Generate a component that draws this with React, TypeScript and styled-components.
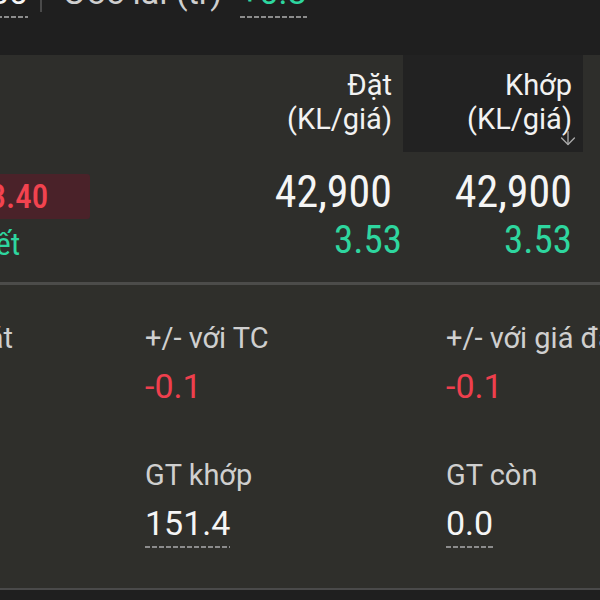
import styled, { createGlobalStyle } from "styled-components";
import { ArrowDown } from "lucide-react";

const GlobalStyle = createGlobalStyle`
  html, body {
    margin: 0;
    padding: 0;
    background: #1f1f1f;
  }
  body {
    font-family: Roboto, "Noto Sans", sans-serif;
  }
`;

const Screen = styled.div`
  width: 600px;
  height: 600px;
  overflow: hidden;
  background: #1f1f1f;
  display: flex;
  flex-direction: column;
`;

const TopBar = styled.div`
  height: 55px;
  flex-shrink: 0;
  display: flex;
  align-items: flex-start;
  margin-left: -10px;
  background: #1f1f1f;
`;

const TopItem = styled.span<{ $tone?: "white" | "green" | "gray" }>`
  margin-top: -26px;
  font-size: 34px;
  line-height: 36px;
  white-space: nowrap;
  color: ${(p) =>
    p.$tone === "green" ? "#2ed69f" : p.$tone === "gray" ? "#cfcfcf" : "#f5f5f5"};
`;

const Dashed = styled.span<{ $gap?: number }>`
  display: inline-block;
  padding-bottom: ${(p) => p.$gap ?? 8}px;
  background-image: repeating-linear-gradient(
    to right,
    #8c8c8c 0 5px,
    transparent 5px 7px
  );
  background-size: 100% 2px;
  background-position: left bottom;
  background-repeat: no-repeat;
`;

const TopDivider = styled.span`
  width: 2px;
  height: 12px;
  margin: 0 21px 0 12px;
  background: #4a4a4a;
`;

const TopValue = styled(TopItem)`
  margin-left: 18px;
`;

const Panel = styled.div`
  background: #2e2e2b;
`;

const Table = styled.div`
  display: grid;
  grid-template-columns: 1fr 180px 180px 17px;
  grid-template-rows: 97px 130px;
`;

const HeadCell = styled.div<{ $dark?: boolean }>`
  position: relative;
  background: ${(p) => (p.$dark ? "#222222" : "transparent")};
  padding: 13px 11px 0 0;
  text-align: right;
  font-size: 29px;
  line-height: 34px;
  color: #f2f2f2;
`;

const SortIcon = styled(ArrowDown)`
  position: absolute;
  right: 4px;
  bottom: 3px;
  color: #a8a8a8;
`;

const BodyCell = styled.div`
  padding: 19px 11px 0 0;
  display: flex;
  flex-direction: column;
  align-items: flex-end;
  font-stretch: 87%;
`;

const LeftCell = styled.div`
  padding-top: 22px;
  display: flex;
  flex-direction: column;
  align-items: flex-start;
  margin-left: -47px;
`;

const PriceBox = styled.div`
  background: #4a2229;
  color: #f2434f;
  font-weight: 500;
  font-size: 33px;
  line-height: 45px;
  font-stretch: 87%;
  padding: 0 42px 0 20px;
  border-radius: 3px;
`;

const SideText = styled.div`
  margin: 5px 0 0 23px;
  color: #2ed69f;
  font-size: 32px;
  line-height: 40px;
  font-stretch: 87%;
`;

const Big = styled.div`
  font-size: 44px;
  line-height: 42px;
  color: #f5f5f5;
`;

const Small = styled.div<{ $shift?: number }>`
  margin-top: 7px;
  margin-right: ${(p) => -(p.$shift ?? 0)}px;
  font-size: 39px;
  line-height: 40px;
  color: #2ed69f;
`;

const Rule = styled.div`
  height: 3px;
  background: #4c4c4a;
`;

const Details = styled.div`
  height: 303px;
  background: #2f2f2b;
  display: grid;
  grid-template-columns: repeat(3, 301px);
  grid-auto-rows: 137px;
  margin-left: -156px;
  padding-top: 35px;
  box-sizing: border-box;
  overflow: hidden;
`;

const Field = styled.div`
  display: flex;
  flex-direction: column;
  align-items: flex-start;
  white-space: nowrap;
`;

const Label = styled.div`
  font-size: 29px;
  line-height: 36px;
  color: #cfcfcf;
`;

const Value = styled.div<{ $red?: boolean }>`
  margin-top: 11px;
  font-size: 34px;
  line-height: 38px;
  color: ${(p) => (p.$red ? "#ee3f4d" : "#f5f5f5")};
`;

const BottomBar = styled.div`
  flex: 1;
  border-top: 2px solid #4a4a4a;
  background: #1f1f1f;
`;

export default function App() {
  return (
    <Screen>
      <GlobalStyle />
      <TopBar>
        <TopItem>
          <Dashed>30</Dashed>
        </TopItem>
        <TopDivider />
        <TopItem $tone="gray">Ước lãi (tr)</TopItem>
        <TopValue $tone="green">
          <Dashed>+0.8</Dashed>
        </TopValue>
      </TopBar>
      <Panel>
        <Table>
          <div />
          <HeadCell>
            Đặt
            <br />
            (KL/giá)
          </HeadCell>
          <HeadCell $dark>
            Khớp
            <br />
            (KL/giá)
            <SortIcon size={22} strokeWidth={1.5} />
          </HeadCell>
          <div />
          <LeftCell>
            <PriceBox>43.40</PriceBox>
            <SideText>Hết</SideText>
          </LeftCell>
          <BodyCell>
            <Big>42,900</Big>
            <Small $shift={10}>3.53</Small>
          </BodyCell>
          <BodyCell>
            <Big>42,900</Big>
            <Small>3.53</Small>
          </BodyCell>
          <div />
        </Table>
      </Panel>
      <Rule />
      <Details>
        <Field>
          <Label>Thời gian đặt</Label>
          <Value>10:21</Value>
        </Field>
        <Field>
          <Label>+/- với TC</Label>
          <Value $red>-0.1</Value>
        </Field>
        <Field>
          <Label>+/- với giá đặt</Label>
          <Value $red>-0.1</Value>
        </Field>
        <Field>
          <Label>Phí</Label>
          <Value>0</Value>
        </Field>
        <Field>
          <Label>GT khớp</Label>
          <Value>
            <Dashed $gap={6}>151.4</Dashed>
          </Value>
        </Field>
        <Field>
          <Label>GT còn</Label>
          <Value>
            <Dashed $gap={6}>0.0</Dashed>
          </Value>
        </Field>
      </Details>
      <BottomBar />
    </Screen>
  );
}
